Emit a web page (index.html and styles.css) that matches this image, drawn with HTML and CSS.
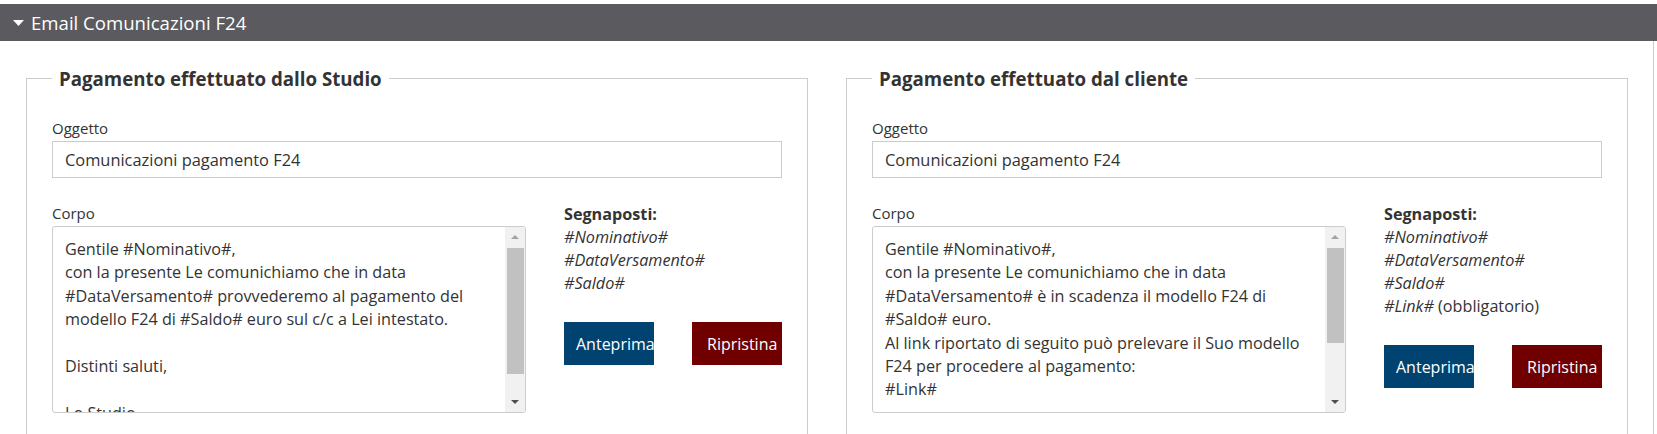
FILE: index.html
```html
<!DOCTYPE html>
<html lang="it">
<head>
<meta charset="utf-8">
<title>Email Comunicazioni F24</title>
<link rel="stylesheet" href="styles.css">
</head>
<body>
<div class="panel">
  <div class="panel-heading">
    <svg class="caret" width="11" height="6" viewBox="0 0 11 6"><path d="M0 0H11L5.5 6Z" fill="#fff"/></svg>
    <span>Email Comunicazioni F24</span>
  </div>
  <div class="panel-body">
    <fieldset class="box">
      <legend>Pagamento effettuato dallo Studio</legend>
      <label class="lbl">Oggetto</label>
      <input class="inp" type="text" value="Comunicazioni pagamento F24">
      <div class="row">
        <div class="col-main">
          <label class="lbl">Corpo</label>
          <div class="ta-wrap">
            <textarea class="ta">Gentile #Nominativo#,
con la presente Le comunichiamo che in data
#DataVersamento# provvederemo al pagamento del
modello F24 di #Saldo# euro sul c/c a Lei intestato.

Distinti saluti,

Lo Studio</textarea>
            <div class="sb" aria-hidden="true">
              <span class="sb-btn sb-up"></span>
              <span class="sb-track"><span class="sb-thumb thumb-a"></span></span>
              <span class="sb-btn sb-down"></span>
            </div>
          </div>
        </div>
        <div class="col-side">
          <div class="tags">
            <strong>Segnaposti:</strong>
            <em>#Nominativo#</em>
            <em>#DataVersamento#</em>
            <em>#Saldo#</em>
          </div>
          <div class="actions">
            <button class="btn btn-preview" type="button">Anteprima</button>
            <button class="btn btn-reset" type="button">Ripristina</button>
          </div>
        </div>
      </div>
    </fieldset>
    <fieldset class="box">
      <legend>Pagamento effettuato dal cliente</legend>
      <label class="lbl">Oggetto</label>
      <input class="inp" type="text" value="Comunicazioni pagamento F24">
      <div class="row">
        <div class="col-main">
          <label class="lbl">Corpo</label>
          <div class="ta-wrap">
            <textarea class="ta">Gentile #Nominativo#,
con la presente Le comunichiamo che in data
#DataVersamento# è in scadenza il modello F24 di
#Saldo# euro.
Al link riportato di seguito può prelevare il Suo modello
F24 per procedere al pagamento:
#Link#

Distinti saluti,

Lo Studio</textarea>
            <div class="sb" aria-hidden="true">
              <span class="sb-btn sb-up"></span>
              <span class="sb-track"><span class="sb-thumb thumb-b"></span></span>
              <span class="sb-btn sb-down"></span>
            </div>
          </div>
        </div>
        <div class="col-side">
          <div class="tags">
            <strong>Segnaposti:</strong>
            <em>#Nominativo#</em>
            <em>#DataVersamento#</em>
            <em>#Saldo#</em>
            <span><em class="inline">#Link#</em> (obbligatorio)</span>
          </div>
          <div class="actions">
            <button class="btn btn-preview" type="button">Anteprima</button>
            <button class="btn btn-reset" type="button">Ripristina</button>
          </div>
        </div>
      </div>
    </fieldset>
  </div>
</div>
</body>
</html>
```
FILE: styles.css
```css
html, body {
  margin: 0;
  padding: 0;
  background: #fff;
}
body {
  font-family: "Open Sans", "Noto Sans", sans-serif;
  color: #333;
}
.panel {
  margin-top: 4px;
}
.panel-heading {
  height: 37px;
  background: #5a5a5f;
  color: #fff;
  display: flex;
  align-items: center;
  padding-left: 13px;
  font-size: 18.6px;
  gap: 7px;
}
.caret {
  display: block;
}
.panel-body {
  width: 1654px;
  box-sizing: border-box;
  border-right: 1px solid #ccc;
  display: grid;
  grid-template-columns: 1fr 1fr;
  column-gap: 38px;
  padding: 25px 25px 0 26px;
}
.box {
  margin: 0;
  min-width: 0;
  border: 1px solid #ccc;
  padding: 26px 25px 40px;
}
.box legend {
  padding: 0 7px;
  font-size: 18.7px;
  font-weight: 700;
  color: #333;
}
.lbl {
  display: block;
  font-size: 15px;
  line-height: 22px;
  margin-bottom: 2px;
}
.inp {
  display: block;
  width: 100%;
  height: 37px;
  box-sizing: border-box;
  margin: 0;
  border: 1px solid #ccc;
  padding: 0 12px;
  font-family: inherit;
  font-size: 16.4px;
  color: #333;
  outline: none;
}
.row {
  display: grid;
  grid-template-columns: 474fr 218fr;
  column-gap: 38px;
  margin-top: 24px;
}
.ta-wrap {
  position: relative;
}
.ta {
  display: block;
  width: 100%;
  height: 187px;
  box-sizing: border-box;
  margin: 0;
  border: 1px solid #ccc;
  border-radius: 3px;
  padding: 11px 32px 11px 12px;
  font-family: inherit;
  font-size: 16.2px;
  line-height: 23.4px;
  color: #333;
  resize: none;
  overflow: hidden;
}
.sb {
  position: absolute;
  top: 1px;
  right: 1px;
  bottom: 1px;
  width: 20px;
  background: #f1f1f1;
  border-radius: 0 2px 2px 0;
  display: flex;
  flex-direction: column;
}
.sb-btn {
  height: 20px;
  flex: none;
  display: flex;
  align-items: center;
  justify-content: center;
}
.sb-btn::before {
  content: "";
  width: 0;
  height: 0;
  border-left: 4px solid transparent;
  border-right: 4px solid transparent;
}
.sb-up::before {
  border-bottom: 4px solid #a3a3a3;
}
.sb-down::before {
  border-top: 4px solid #505050;
}
.sb-track {
  flex: 1;
  padding: 1px 1px 0 2px;
}
.sb-thumb {
  display: block;
  background: #c1c1c1;
}
.thumb-a {
  height: 126px;
}
.thumb-b {
  height: 95px;
}
.tags {
  display: flex;
  flex-direction: column;
  font-size: 16.2px;
  line-height: 23px;
  padding-top: 1px;
}
.tags strong {
  font-weight: 700;
}
.tags em.inline {
  display: inline;
}
.actions {
  display: flex;
  gap: 38px;
  margin-top: 27px;
}
.btn {
  width: 90px;
  height: 43px;
  border: none;
  border-radius: 0;
  margin: 0;
  color: #fff;
  font-family: inherit;
  font-size: 16px;
  text-align: left;
  white-space: nowrap;
  overflow: hidden;
  padding: 0 0 0 12px;
}
.btn-preview {
  background: #004370;
}
.btn-reset {
  background: #700000;
  padding-left: 15px;
}
```
